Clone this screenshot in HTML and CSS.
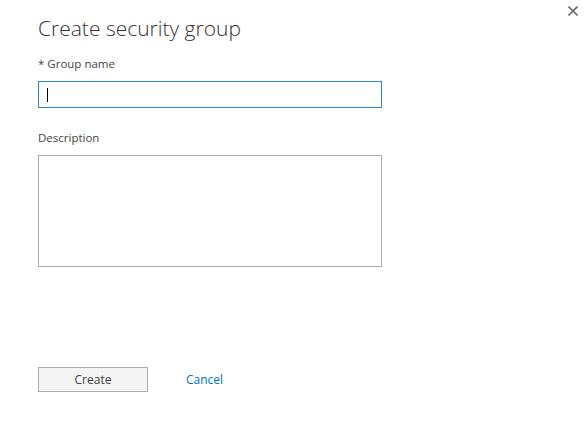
FILE: index.html
```html
<!DOCTYPE html>
<html>
<head>
<meta charset="utf-8">
<link rel="stylesheet" href="styles.css">
</head>
<body>
<div class="panel">
  <button class="close" aria-label="Close">
    <svg width="10" height="10" viewBox="0 0 10 10"><path d="M0.5 0.5 L9.5 9.5 M9.5 0.5 L0.5 9.5" stroke="#6e6e6e" stroke-width="1.6" fill="none"/></svg>
  </button>
  <h1 class="title">Create security group</h1>
  <label class="label">* Group name</label>
  <div class="input focused"><span class="caret"></span></div>
  <label class="label desc">Description</label>
  <div class="textarea"></div>
  <div class="actions">
    <button class="btn">Create</button>
    <a class="link" href="#">Cancel</a>
  </div>
</div>
</body>
</html>
```
FILE: styles.css
```css
html, body {
  margin: 0;
  padding: 0;
  background: #fff;
}
.panel {
  position: relative;
  width: 588px;
  height: 436px;
  box-sizing: border-box;
  padding: 13px 0 0 38px;
  font-family: "Open Sans", "Noto Sans", sans-serif;
  color: #333;
}
.close {
  position: absolute;
  top: 6px;
  left: 568px;
  width: 10px;
  height: 10px;
  padding: 0;
  border: 0;
  background: none;
  display: flex;
}
.title {
  margin: 0;
  font-weight: 300;
  font-size: 21px;
  line-height: 30px;
  color: #333;
}
.label {
  display: block;
  font-size: 11.5px;
  line-height: 16px;
  color: #444;
  margin-top: 13px;
}
.label.desc {
  margin-top: 22px;
}
.input {
  margin-top: 9px;
  width: 344px;
  height: 27px;
  box-sizing: border-box;
  border: 1px solid #a6aeae;
  padding: 6px 0 0 8px;
}
.input.focused {
  border-color: #2b88d8;
}
.caret {
  display: block;
  width: 1px;
  height: 14px;
  background: #000;
}
.textarea {
  margin-top: 9px;
  width: 344px;
  height: 112px;
  box-sizing: border-box;
  border: 1px solid #a6aeae;
}
.actions {
  margin-top: 100px;
  display: flex;
  align-items: center;
  gap: 38px;
}
.btn {
  width: 110px;
  height: 25px;
  box-sizing: border-box;
  border: 1px solid #a6aeae;
  background: #f4f4f4;
  font-family: inherit;
  font-size: 12px;
  color: #444;
  padding: 0;
}
.link {
  font-size: 12px;
  color: #0072c6;
  text-decoration: none;
}
```
